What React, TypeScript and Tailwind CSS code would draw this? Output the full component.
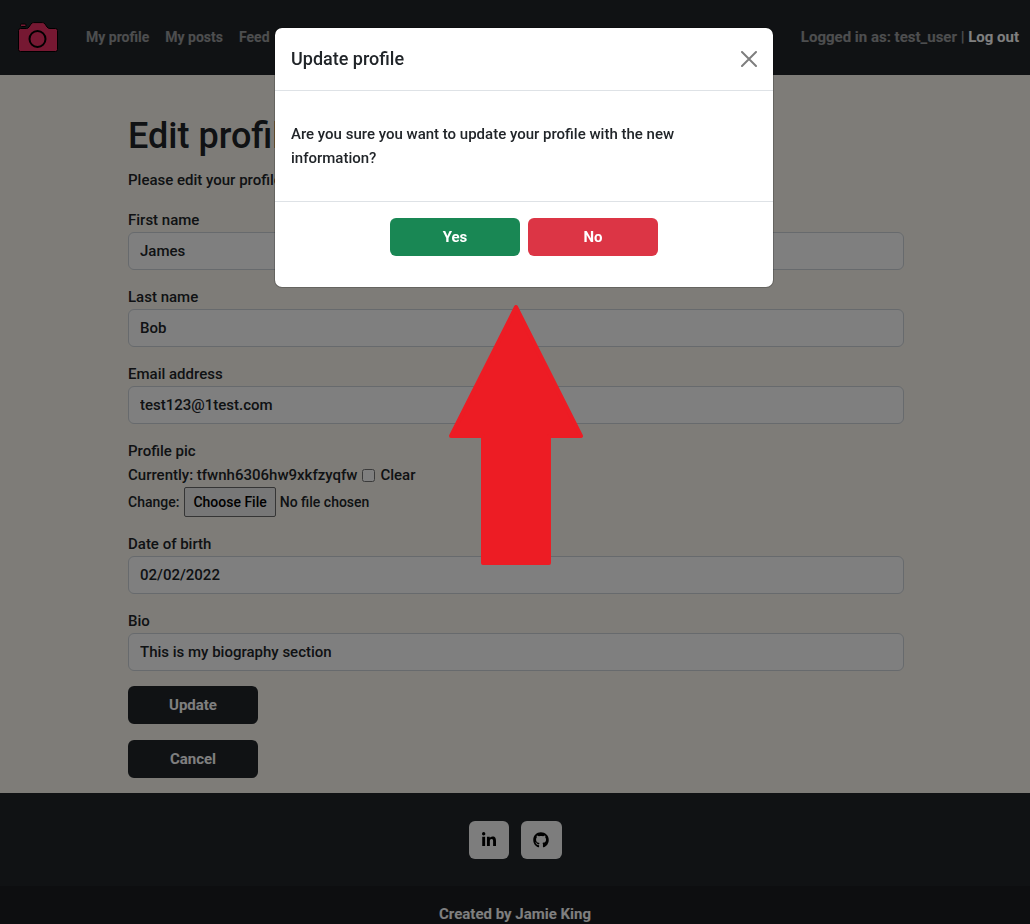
import type { ReactNode } from "react";
import { FaGithub, FaLinkedinIn } from "react-icons/fa";

function CameraLogo() {
  return (
    <svg viewBox="0 0 40 30" className="h-[30px] w-10" aria-hidden="true">
      <g fill="#ec3064" stroke="#000" strokeWidth="1" strokeLinejoin="round">
        <path d="M2.500 6.500H8.500Q10 6.500 11 5L13 2Q14 .6 15.500 .6H24.500Q26 .6 27 2L29 5Q30 6.500 32 6.500H37.500Q39.500 6.500 39.500 8.500V27.500Q39.500 29.500 37.500 29.500H2.500Q.5 29.500 .5 27.500V8.500Q.5 6.500 2.500 6.500Z" />
        <rect x="2.500" y="2" width="5.500" height="2.500" rx="1" />
        <circle cx="19.500" cy="17" r="8" strokeWidth="2" />
      </g>
    </svg>
  );
}

function Field({ id, label, value }: { id: string; label: string; value: string }) {
  return (
    <div className="mb-[15px] flex flex-col">
      <label htmlFor={id} className="self-start">
        {label}
      </label>
      <input
        id={id}
        type="text"
        defaultValue={value}
        className="h-[38px] w-full rounded-md border border-[#ced4da] bg-white px-[11px]"
      />
    </div>
  );
}

function ActionButton({ className, children }: { className: string; children: ReactNode }) {
  return (
    <button type="button" className={`h-[38px] w-[130px] rounded-md font-bold text-white ${className}`}>
      {children}
    </button>
  );
}

function UpdateDialog() {
  return (
    <div className="fixed inset-0 bg-black/50 pt-[27px] pl-[18px]">
      <div
        role="dialog"
        aria-modal="true"
        aria-labelledby="dialog-title"
        className="mx-auto max-w-[500px] overflow-hidden rounded-lg border border-black/20 bg-white bg-clip-padding"
      >
        <header className="flex h-[63px] items-center justify-between border-b border-[#dee2e6] px-4">
          <h2 id="dialog-title" className="text-[18px] leading-[30px] font-medium">
            Update profile
          </h2>
          <button type="button" aria-label="Close" className="opacity-50">
            <svg viewBox="0 0 16 16" className="size-4">
              <path d="M1 1L15 15M15 1L1 15" stroke="#000" strokeWidth="2" strokeLinecap="round" />
            </svg>
          </button>
        </header>
        <p className="border-b border-[#dee2e6] py-[31px] pr-16 pl-4">
          Are you sure you want to update your profile with the new information?
        </p>
        <div className="flex justify-center gap-2 pt-4 pb-[31px]">
          <ActionButton className="bg-[#198754]">Yes</ActionButton>
          <ActionButton className="bg-[#dc3545]">No</ActionButton>
        </div>
      </div>
      <svg viewBox="0 0 134 260" className="absolute top-[305px] left-1/2 -ml-[66px] h-[260px] w-[134px]" aria-hidden="true">
        <path d="M67 2L132 131H100V258H34V131H2Z" fill="#ed1c24" stroke="#ed1c24" strokeWidth="4" strokeLinejoin="round" />
      </svg>
    </div>
  );
}

export default function App() {
  return (
    <div className="h-screen overflow-hidden bg-[#fdf9f0] font-['Roboto',sans-serif] text-[15px] leading-6 font-medium text-[#212529]">
      <nav className="flex h-[75px] items-center bg-[#212529] pr-[11px] pb-0.5 pl-[18px] font-bold text-white/55">
        <a href="#home" aria-label="Home" className="mr-7">
          <CameraLogo />
        </a>
        <div className="flex gap-4 text-[14px]">
          <a href="#profile">My profile</a>
          <a href="#posts">My posts</a>
          <a href="#feed">Feed</a>
        </div>
        <p className="ml-auto">
          Logged in as: test_user | <a href="#logout" className="text-white">Log out</a>
        </p>
      </nav>

      <main className="pt-[37px] pr-[126px] pl-32">
        <h1 className="mb-2 text-[36px] leading-[48px] font-medium">Edit profile</h1>
        <p className="mb-4">Please edit your profile information below</p>
        <form>
          <Field id="first-name" label="First name" value="James" />
          <Field id="last-name" label="Last name" value="Bob" />
          <Field id="email" label="Email address" value="test123@1test.com" />
          <div className="mb-[15px]">
            <label htmlFor="picture" className="block">
              Profile pic
            </label>
            <div className="flex items-center gap-[5px]">
              <span>Currently: tfwnh6306hw9xkfzyqfw</span>
              <input id="clear" type="checkbox" className="size-[13px]" />
              <label htmlFor="clear">Clear</label>
            </div>
            <div className="flex h-[30px] items-center gap-[5px] text-[14px]">
              <span>Change:</span>
              <input
                id="picture"
                type="file"
                className="file:mr-1 file:h-[30px] file:rounded-[2px] file:border file:border-solid file:border-[#6b6b6b] file:bg-[#efefef] file:px-2 file:text-black"
              />
            </div>
          </div>
          <Field id="birth" label="Date of birth" value="02/02/2022" />
          <Field id="bio" label="Bio" value="This is my biography section" />
          <div className="flex flex-col items-start gap-4 pb-[15px]">
            <ActionButton className="bg-[#212529]">Update</ActionButton>
            <ActionButton className="bg-[#212529]">Cancel</ActionButton>
          </div>
        </form>
      </main>

      <footer className="bg-[#212529] text-white">
        <div className="flex h-[93px] items-center justify-center gap-3">
          <a href="#linkedin" aria-label="LinkedIn" className="flex h-[38px] w-10 items-center justify-center rounded-md bg-[#fbfbfb] text-black">
            <FaLinkedinIn className="size-4" />
          </a>
          <a href="#github" aria-label="GitHub" className="flex h-[38px] w-[41px] items-center justify-center rounded-md bg-[#fbfbfb] text-black">
            <FaGithub className="size-4" />
          </a>
        </div>
        <p className="bg-black/20 py-4 text-center font-bold">Created by Jamie King</p>
      </footer>

      <UpdateDialog />
    </div>
  );
}
